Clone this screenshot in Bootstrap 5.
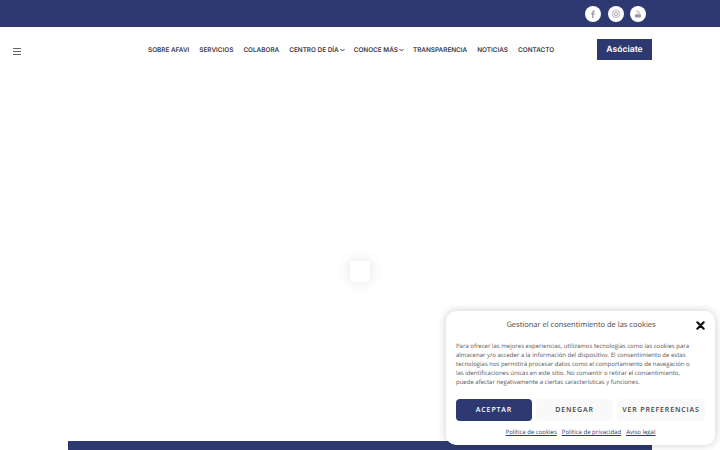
<!DOCTYPE html>
<html lang="es"><head><meta charset="utf-8">
<link href="https://cdn.jsdelivr.net/npm/bootstrap@5.3.0/dist/css/bootstrap.min.css" rel="stylesheet">
<script src="https://cdn.jsdelivr.net/npm/bootstrap@5.3.0/dist/js/bootstrap.bundle.min.js"></script>
<style>
html,body{height:450px;overflow:hidden;background:#fff}
body{position:relative;font-family:"Open Sans",sans-serif;text-rendering:geometricPrecision}
.topstrip{height:27px;background:#2e3971;padding-right:74px;gap:6.500px}
.soc{width:16px;height:16px;border-radius:50%;background:#fff;color:#9a97a0}
.soc svg{width:8px;height:8px;display:block}
.mainbar{height:45px;padding-left:13px;padding-right:68px}
.burgerbox{width:8px;height:7px;margin-top:3px;border-top:1px solid #666;border-bottom:1px solid #666;background:linear-gradient(#666,#666) center/100% 1px no-repeat}
.menu{margin-left:127px;margin-top:1px;gap:10px;font:600 6.400px/1 Inter,sans-serif;color:#3c3c46;white-space:nowrap}
.menu span{display:inline-flex;align-items:center;gap:1px}
.menu svg{width:5px;height:4px;margin-right:-1px}
.joinbtn{width:55px;height:21px;border-radius:0;background:#2e3971;color:#fff;font:600 8.600px/20px Inter,sans-serif;padding:1px 0 0;text-align:center;margin-left:auto;border:0}
.stage{height:369px}
.loader{width:20px;height:21px;background:#fff;border-radius:2px;box-shadow:0 0 14px rgba(0,0,0,.12);margin-top:189px}
.footband{position:absolute;left:68px;right:68px;top:441px;height:9px;background:#2e3971}
.cookiebox{position:absolute;left:446px;top:311px;width:269px;height:134px;background:#fff;border-radius:10px;box-shadow:0 0 10px rgba(0,0,0,.2);padding:0 10px;color:#222}
.ctitle{font-size:7.500px;line-height:12px;padding-top:8px;text-align:center;color:#444;height:27px;margin-left:9px;width:232px}
.cx{position:absolute;right:10.500px;top:9.500px;width:9px;height:9px}
.ctext{font-size:6px;line-height:9px;margin:0;padding-top:4px;color:#555;white-space:nowrap;height:52px}
.cbtns{display:flex;gap:4px;margin-top:9px}
.cbtns button{height:22px;padding:0;border:0;border-radius:4px;font-size:7px;letter-spacing:.85px;font-weight:600;background:#f9f9f9;color:#444;white-space:nowrap}
.cbtns .acc{width:76px;background:#2e3971;color:#fff}
.cbtns .den{width:77px}
.cbtns .pref{width:88px}
.clinks{display:flex;justify-content:center;gap:5px;font-size:6px;line-height:9px;margin-top:7px}
.clinks a{color:#2e3971}
</style></head><body>
<div class="topstrip d-flex justify-content-end align-items-center">
<a class="soc d-flex align-items-center justify-content-center"><svg viewBox="0 0 10 10"><path fill="currentColor" d="M4 10V5.600H2.700V4H4V2.800C4 1.400 4.800.7 6 .7h1.200v1.600h-.8c-.6 0-.8.3-.8.8V4h1.600l-.2 1.600H5.600V10z"/></svg></a>
<a class="soc d-flex align-items-center justify-content-center"><svg viewBox="0 0 10 10" fill="none" stroke="currentColor"><rect x="1" y="1" width="8" height="8" rx="2.200"/><circle cx="5" cy="5" r="2"/></svg></a>
<a class="soc d-flex align-items-center justify-content-center"><svg viewBox="0 0 10 10"><path fill="currentColor" d="M2.200 5.200h5.600c.6 0 1 .4 1 1v2.300c0 .6-.4 1-1 1H2.200c-.6 0-1-.4-1-1V6.200c0-.6.400-1 1-1zM3.300.4l.6 1.500.6-1.500h.6L4.200 2.500v1.800h-.6V2.500L2.700.4zM5.600 1.500h1.500v2.800h-.6v-.3c-.5.500-1.100.500-1.200-.1zm.5.500v1.500c.2.200.3.200.5 0V2z"/></svg></a>
</div>
<nav class="mainbar d-flex align-items-center">
<span class="burgerbox" aria-label="Menú"></span>
<div class="menu d-flex align-items-center"><span>SOBRE AFAVI</span><span>SERVICIOS</span><span>COLABORA</span><span>CENTRO DE DÍA<svg viewBox="0 0 5 4" fill="none" stroke="currentColor"><path d="M.5 1l2 2 2-2"/></svg></span><span>CONOCE MÁS<svg viewBox="0 0 5 4" fill="none" stroke="currentColor"><path d="M.5 1l2 2 2-2"/></svg></span><span>TRANSPARENCIA</span><span>NOTICIAS</span><span>CONTACTO</span></div>
<a class="btn joinbtn">Asóciate</a>
</nav>
<div class="stage d-flex justify-content-center align-items-start"><div class="loader"></div></div>
<div class="footband"></div>
<div class="cookiebox">
<div class="ctitle">Gestionar el consentimiento de las cookies</div>
<svg class="cx" viewBox="0 0 10 10"><path d="M1.500 1.500l7 7M8.500 1.500l-7 7" stroke="#111" stroke-width="2.400" stroke-linecap="round"/></svg>
<p class="ctext">Para ofrecer las mejores experiencias, utilizamos tecnologías como las cookies para<br>almacenar y/o acceder a la información del dispositivo. El consentimiento de estas<br>tecnologías nos permitirá procesar datos como el comportamiento de navegación o<br>las identificaciones únicas en este sitio. No consentir o retirar el consentimiento,<br>puede afectar negativamente a ciertas características y funciones.</p>
<div class="cbtns"><button class="acc">ACEPTAR</button><button class="den">DENEGAR</button><button class="pref">VER PREFERENCIAS</button></div>
<div class="clinks"><a href="#">Política de cookies</a><a href="#">Política de privacidad</a><a href="#">Aviso legal</a></div>
</div>
</body></html>
